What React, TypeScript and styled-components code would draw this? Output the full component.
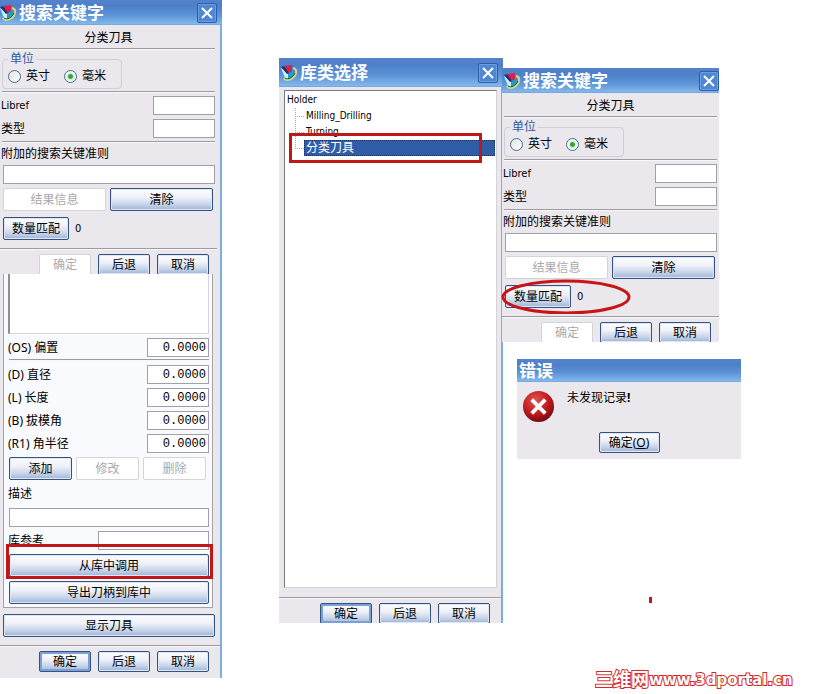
import React, { useId } from "react";
import styled, { createGlobalStyle, css } from "styled-components";

const sans = `"Noto Sans", "Noto Sans CJK SC", sans-serif`;
const condensed = `"DejaVu Sans Condensed", "Noto Sans CJK SC", sans-serif`;

const GlobalStyle = createGlobalStyle`
  *, *::before, *::after { box-sizing: border-box; }
  html, body { margin: 0; padding: 0; background: #fff; }
  body, button, input { font-family: ${sans}; font-size: 12px; line-height: 16px; color: #000; }
`;

const Desktop = styled.main`
  position: relative;
  min-height: 100vh;
  overflow: hidden;
  background: #fff;
`;

const Window = styled.section<{ $x: number; $y: number; $w: number; $edge?: boolean }>`
  position: absolute;
  left: ${(p) => p.$x}px;
  top: ${(p) => p.$y}px;
  width: ${(p) => p.$w}px;
  background: #eae7ed;
  ${(p) =>
    p.$edge &&
    css`
      border-right: 2px solid #79aee0;
    `}
`;

const barHeights = { short: 23, normal: 25, tall: 29 };

const TitleBar = styled.header<{ $size?: keyof typeof barHeights; $bleed?: boolean; $inset?: boolean }>`
  display: flex;
  align-items: center;
  height: ${(p) => barHeights[p.$size ?? "normal"]}px;
  margin-right: ${(p) => (p.$bleed ? -2 : 0)}px;
  padding-left: ${(p) => (p.$inset ? 2 : 0)}px;
  padding-right: ${(p) => (p.$bleed ? 5 : 0)}px;
  background: linear-gradient(#5583cb 0%, #4d80ca 25%, #5b93d6 60%, #83b7ec 96%, #6b9bd2 100%);
`;

const Title = styled.h2`
  flex: 1;
  margin: 0;
  padding-left: 2px;
  font-size: 17px;
  line-height: 20px;
  font-weight: 700;
  color: #fff;
  white-space: nowrap;
`;

const CloseButton = styled.button`
  display: flex;
  align-items: center;
  justify-content: center;
  width: 20px;
  height: 20px;
  padding: 0;
  border: 1px solid #2f5ea9;
  border-radius: 2px;
  background: #4f87d2;
  box-shadow: inset 0 0 0 1px #6c9ddf;
`;

const Body = styled.div`
  padding: 0 2px;
`;

const Heading = styled.div`
  height: 23px;
  padding-top: 4px;
  line-height: 18px;
  text-align: center;
`;

const Divider = styled.hr`
  height: 2px;
  margin: 0;
  border: 0;
  border-top: 1px solid #9c9b9f;
  border-bottom: 1px solid #f8f7fa;
`;

const UnitArea = styled.div`
  height: 41px;
  padding-top: 1px;
`;

const UnitGroup = styled.fieldset`
  display: flex;
  gap: 14px;
  width: 120px;
  height: 38px;
  min-width: 0;
  margin: 0;
  padding: 0 5px;
  border: 1px solid #d0ced6;
  border-radius: 4px;
`;

const Legend = styled.legend`
  padding: 0 2px;
  line-height: 16px;
  color: #34589c;
`;

const RadioLabel = styled.label`
  display: flex;
  align-items: center;
  gap: 5px;
  height: 18px;
  white-space: nowrap;
`;

const Radio = styled.input`
  appearance: none;
  width: 13px;
  height: 13px;
  margin: 0;
  border: 1px solid #3f6f97;
  border-radius: 50%;
  background: linear-gradient(135deg, #e2e4e2, #fff);
  &:checked {
    background: radial-gradient(circle, #37a637 0 2px, #d9eedd 3px, #fff 6px);
  }
`;

const FieldGroup = styled.div`
  padding: 1px 0;
`;

const FieldRow = styled.div`
  display: flex;
  align-items: center;
  justify-content: space-between;
  height: 23px;
`;

const FieldLabel = styled.label`
  margin-left: -1px;
  white-space: nowrap;
`;

const LatinLabel = styled(FieldLabel)`
  font-family: ${condensed};
  font-size: 11px;
`;

const TextBox = styled.input<{ $w?: number }>`
  width: ${(p) => (p.$w ? `${p.$w}px` : "100%")};
  height: 19px;
  padding: 0 2px;
  border: 1px solid #a0a0a6;
  border-radius: 0;
  background: #fff;
  outline: none;
`;

const NumberBox = styled(TextBox)`
  font-family: "Liberation Mono", monospace;
  text-align: right;
`;

const Button = styled.button<{ $w?: number; $short?: boolean; $default?: boolean }>`
  flex: none;
  width: ${(p) => (p.$w ? `${p.$w}px` : "100%")};
  height: ${(p) => (p.$short ? 21 : 23)}px;
  padding: 0;
  border: 1px solid #34517f;
  border-radius: 2px;
  background: linear-gradient(#fdfdff 0%, #eef1f8 40%, #c5d2e8 75%, #9db3d7 100%);
  box-shadow: ${(p) => (p.$default ? "inset 0 0 0 2px #7ba0d6" : "inset 0 0 0 1px #dfe7f4")};
  white-space: nowrap;
  &:disabled {
    border-color: #d3d3d8;
    background: #fff;
    box-shadow: none;
    color: #a9a9ad;
  }
`;

const Stack = styled.div`
  display: flex;
  flex-direction: column;
  padding-left: 1px;
`;

const CriteriaLabel = styled(FieldLabel)`
  margin-left: -2px;
  padding: 3px 0;
`;

const ButtonRow = styled.div<{ $gap: number }>`
  display: flex;
  align-items: center;
  gap: ${(p) => p.$gap}px;
`;

const ResultRow = styled(ButtonRow)`
  padding-top: 4px;
`;

const CountRow = styled(ButtonRow)`
  position: relative;
  padding: 6px 0 8px;
`;

const Count = styled.output`
  font-family: ${condensed};
  font-size: 11px;
`;

const Footer = styled.footer<{ $cut?: boolean; $wide?: boolean }>`
  display: flex;
  justify-content: flex-end;
  gap: 7px;
  height: ${(p) => (p.$cut ? 24 : 31)}px;
  padding: 4px ${(p) => (p.$wide ? 11 : 8)}px 0 0;
  overflow: hidden;
`;

const RedFrame = styled.div<{ $l: number; $r: number; $t: number; $b: number }>`
  position: absolute;
  left: ${(p) => p.$l}px;
  right: ${(p) => p.$r}px;
  top: ${(p) => p.$t}px;
  bottom: ${(p) => p.$b}px;
  border: 3px solid #c01818;
  pointer-events: none;
`;

const Ellipse = styled.svg`
  position: absolute;
  left: -4px;
  top: 0;
  width: 130px;
  height: 35px;
  pointer-events: none;
`;

const FormBody = styled.div<{ $inset?: boolean }>`
  padding-right: ${(p) => (p.$inset ? 3 : 0)}px;
`;

const ToolPanel = styled.div`
  margin: 0 7px 6px 3px;
  padding: 0 3px 3px 5px;
  border: 1px solid #a3a3aa;
  border-top: 0;
  background: #f9fafd;
`;

const EmptyList = styled.div`
  height: 60px;
  margin: 0 0 2px -1px;
  border: 1px solid #d5d5da;
  border-top: 0;
  border-left: 2px solid #8d8d92;
  background: #fff;
`;

const DimensionFields = styled.div`
  padding: 2px 0;
`;

const DescriptionLabel = styled(FieldLabel)`
  display: block;
  padding: 6px 0;
`;

const FramedButton = styled.div`
  position: relative;
  margin-bottom: 4px;
`;

const LibraryRow = styled(FieldRow)`
  margin-top: 4px;
  align-items: flex-start;
`;

const LibraryLabel = styled(FieldLabel)`
  line-height: 19px;
`;

const WideButtonArea = styled.div`
  padding: 0 5px 8px 3px;
`;

const ListArea = styled.div`
  position: relative;
  padding: 3px 4px 9px 5px;
`;

const Tree = styled.ul`
  height: 498px;
  margin: 0;
  padding: 1px 1px 0 2px;
  border: 1px solid #d4d3d8;
  border-left-color: #77777c;
  border-top-color: #77777c;
  background: #fff;
  list-style: none;
  font-family: ${condensed};
  font-size: 10px;
`;

const Branch = styled.ul`
  margin: 0 0 0 8px;
  padding: 0;
  list-style: none;
`;

const Leaf = styled.li<{ $last?: boolean }>`
  display: flex;
  height: 16px;
  background:
    linear-gradient(#fff, #fff) no-repeat 0 9px / ${(p) => (p.$last ? "1px 8px" : "0 0")},
    repeating-linear-gradient(#aaa 0 1px, #fff 1px 2px) no-repeat 0 0 / 1px 100%,
    repeating-linear-gradient(90deg, #aaa 0 1px, #fff 1px 2px) no-repeat 0 8px / 9px 1px;
`;

const LeafText = styled.span<{ $selected?: boolean }>`
  flex: 1;
  margin-left: 9px;
  padding-left: 2px;
  line-height: 16px;
  ${(p) =>
    p.$selected &&
    css`
      padding-left: 1px;
      border: 1px dotted #16305f;
      line-height: 14px;
      font-family: ${sans};
      font-size: 12px;
      background: #2f5da8;
      color: #fff;
    `}
`;

const ErrorContent = styled.div`
  display: flex;
  gap: 12px;
  padding: 8px 5px 0;
`;

const ErrorText = styled.p`
  margin: 0;
`;

const ErrorActions = styled.div`
  display: flex;
  justify-content: center;
  padding: 9px 0 6px;
`;

const RedMark = styled.div`
  position: absolute;
  left: 649px;
  top: 597px;
  width: 3px;
  height: 6px;
  background: #b91c1c;
`;

const Watermark = styled.a`
  position: absolute;
  left: 595px;
  top: 670px;
  display: flex;
  align-items: center;
  height: 20px;
  font-family: "DejaVu Sans", "Noto Sans CJK SC", sans-serif;
  font-size: 15px;
  font-weight: 700;
  color: #fff;
  -webkit-text-stroke: 2px #d32a2a;
  paint-order: stroke fill;
  text-decoration: none;
  white-space: nowrap;
`;

const WatermarkName = styled.span`
  font-size: 18px;
`;

function AppIcon() {
  return (
    <svg width="17" height="18" viewBox="0 0 17 18" aria-hidden="true">
      <path d="M0 4 L4 14 C7 16 11 15 13 12 L13 6 L8 8 Z" fill="#1f9fc4" />
      <path d="M0 4 L4 14 L7 15 L7 8 Z" fill="#c4f3fb" />
      <path d="M0 3 L4 2 L8 9 L6 10 Z" fill="#252a78" />
      <path d="M3 2 L11 1 L11 7 L8 9 Z" fill="#d9214b" />
      <path d="M12 4 C17 5 16 12 10 15 C7 17 4 16 3 14" fill="none" stroke="#d9d67c" strokeWidth="2" />
      <path d="M4 14 C7 16 12 14 14 9" fill="none" stroke="#1f5a4a" strokeWidth="1" />
    </svg>
  );
}

function Close() {
  return (
    <CloseButton type="button" aria-label="关闭">
      <svg width="12" height="12" viewBox="0 0 12 12" aria-hidden="true">
        <path d="M1 1 L11 11 M11 1 L1 11" stroke="#fff" strokeWidth="2" />
      </svg>
    </CloseButton>
  );
}

function FooterButtons({ okDisabled }: { okDisabled?: boolean }) {
  return (
    <>
      <Button type="button" $w={52} $short $default={!okDisabled} disabled={okDisabled}>确定</Button>
      <Button type="button" $w={52} $short>后退</Button>
      <Button type="button" $w={52} $short>取消</Button>
    </>
  );
}

function SearchForm({ circled, bleed }: { circled?: boolean; bleed?: boolean }) {
  const id = useId();
  return (
    <>
      <TitleBar $bleed={bleed} $inset={!bleed}>
        <AppIcon />
        <Title>搜索关键字</Title>
        <Close />
      </TitleBar>
      <FormBody $inset={bleed}>
        <Body>
          <Heading>分类刀具</Heading>
          <Divider />
          <UnitArea>
            <UnitGroup>
              <Legend>单位</Legend>
              <RadioLabel>
                <Radio type="radio" name={`${id}-unit`} />
                英寸
              </RadioLabel>
              <RadioLabel>
                <Radio type="radio" name={`${id}-unit`} defaultChecked />
                毫米
              </RadioLabel>
            </UnitGroup>
          </UnitArea>
          <Divider />
          <FieldGroup>
            <FieldRow>
              <LatinLabel htmlFor={`${id}-lib`}>Libref</LatinLabel>
              <TextBox $w={62} id={`${id}-lib`} />
            </FieldRow>
            <FieldRow>
              <FieldLabel htmlFor={`${id}-type`}>类型</FieldLabel>
              <TextBox $w={62} id={`${id}-type`} />
            </FieldRow>
          </FieldGroup>
          <Divider />
          <Stack>
            <CriteriaLabel htmlFor={`${id}-crit`}>附加的搜索关键准则</CriteriaLabel>
            <TextBox id={`${id}-crit`} />
            <ResultRow $gap={4}>
              <Button type="button" $w={103} disabled>结果信息</Button>
              <Button type="button" $w={103}>清除</Button>
            </ResultRow>
            <CountRow $gap={6}>
              <Button type="button" $w={66}>数量匹配</Button>
              <Count>0</Count>
              {circled && (
                <Ellipse viewBox="0 0 130 35" aria-hidden="true">
                  <ellipse cx="65" cy="18" rx="63" ry="16" fill="none" stroke="#c81414" strokeWidth="3" />
                </Ellipse>
              )}
            </CountRow>
          </Stack>
        </Body>
        <Divider />
        <Footer $cut>
          <FooterButtons okDisabled />
        </Footer>
      </FormBody>
    </>
  );
}

function NumberField({ label }: { label: string }) {
  const id = useId();
  return (
    <FieldRow>
      <FieldLabel htmlFor={id}>{label}</FieldLabel>
      <NumberBox $w={62} id={id} defaultValue="0.0000" />
    </FieldRow>
  );
}

function ToolForm() {
  const id = useId();
  return (
    <>
      <ToolPanel>
        <EmptyList />
        <NumberField label="(OS) 偏置" />
        <Divider />
        <DimensionFields>
          <NumberField label="(D) 直径" />
          <NumberField label="(L) 长度" />
          <NumberField label="(B) 拔模角" />
          <NumberField label="(R1) 角半径" />
        </DimensionFields>
        <ButtonRow $gap={4}>
          <Button type="button" $w={63}>添加</Button>
          <Button type="button" $w={63} disabled>修改</Button>
          <Button type="button" $w={63} disabled>删除</Button>
        </ButtonRow>
        <DescriptionLabel htmlFor={`${id}-desc`}>描述</DescriptionLabel>
        <TextBox id={`${id}-desc`} />
        <LibraryRow>
          <LibraryLabel htmlFor={`${id}-ref`}>库参考</LibraryLabel>
          <TextBox $w={111} id={`${id}-ref`} />
        </LibraryRow>
        <FramedButton>
          <Button type="button">从库中调用</Button>
          <RedFrame $l={-3} $r={-4} $t={-10} $b={-2} />
        </FramedButton>
        <Button type="button">导出刀柄到库中</Button>
      </ToolPanel>
      <WideButtonArea>
        <Button type="button">显示刀具</Button>
      </WideButtonArea>
      <Divider />
      <Footer $wide>
        <FooterButtons />
      </Footer>
    </>
  );
}

export default function App() {
  return (
    <>
      <GlobalStyle />
      <Desktop>
        <Window $x={0} $y={0} $w={222} $edge>
          <SearchForm bleed />
          <ToolForm />
        </Window>

        <Window $x={279} $y={58} $w={224} $edge>
          <TitleBar $size="tall" $bleed $inset>
            <AppIcon />
            <Title>库类选择</Title>
            <Close />
          </TitleBar>
          <ListArea>
            <Tree>
              <li>
                Holder
                <Branch>
                  <Leaf><LeafText>Milling_Drilling</LeafText></Leaf>
                  <Leaf><LeafText>Turning</LeafText></Leaf>
                  <Leaf $last><LeafText $selected>分类刀具</LeafText></Leaf>
                </Branch>
              </li>
            </Tree>
            <RedFrame $l={10} $r={19} $t={46} $b={434} />
          </ListArea>
          <Divider />
          <Footer $cut $wide>
            <FooterButtons />
          </Footer>
        </Window>

        <Window $x={502} $y={68} $w={217}>
          <SearchForm circled />
        </Window>

        <Window $x={517} $y={359} $w={224}>
          <TitleBar $size="short">
            <Title>错误</Title>
          </TitleBar>
          <ErrorContent>
            <svg width="33" height="33" viewBox="0 0 34 34" aria-hidden="true">
              <defs>
                <radialGradient id="alert" cx="40%" cy="30%" r="70%">
                  <stop offset="0" stopColor="#e2544e" />
                  <stop offset="0.6" stopColor="#c01c20" />
                  <stop offset="1" stopColor="#7c0c12" />
                </radialGradient>
              </defs>
              <circle cx="17" cy="17" r="16" fill="url(#alert)" />
              <path d="M10 10 L24 24 M24 10 L10 24" stroke="#fff" strokeWidth="4" />
            </svg>
            <ErrorText>未发现记录<b>!</b></ErrorText>
          </ErrorContent>
          <ErrorActions>
            <Button type="button" $w={61} $short>确定(<u>O</u>)</Button>
          </ErrorActions>
        </Window>

        <RedMark />
        <Watermark href="#">
          <WatermarkName>三维网</WatermarkName>www.3dportal.cn
        </Watermark>
      </Desktop>
    </>
  );
}
